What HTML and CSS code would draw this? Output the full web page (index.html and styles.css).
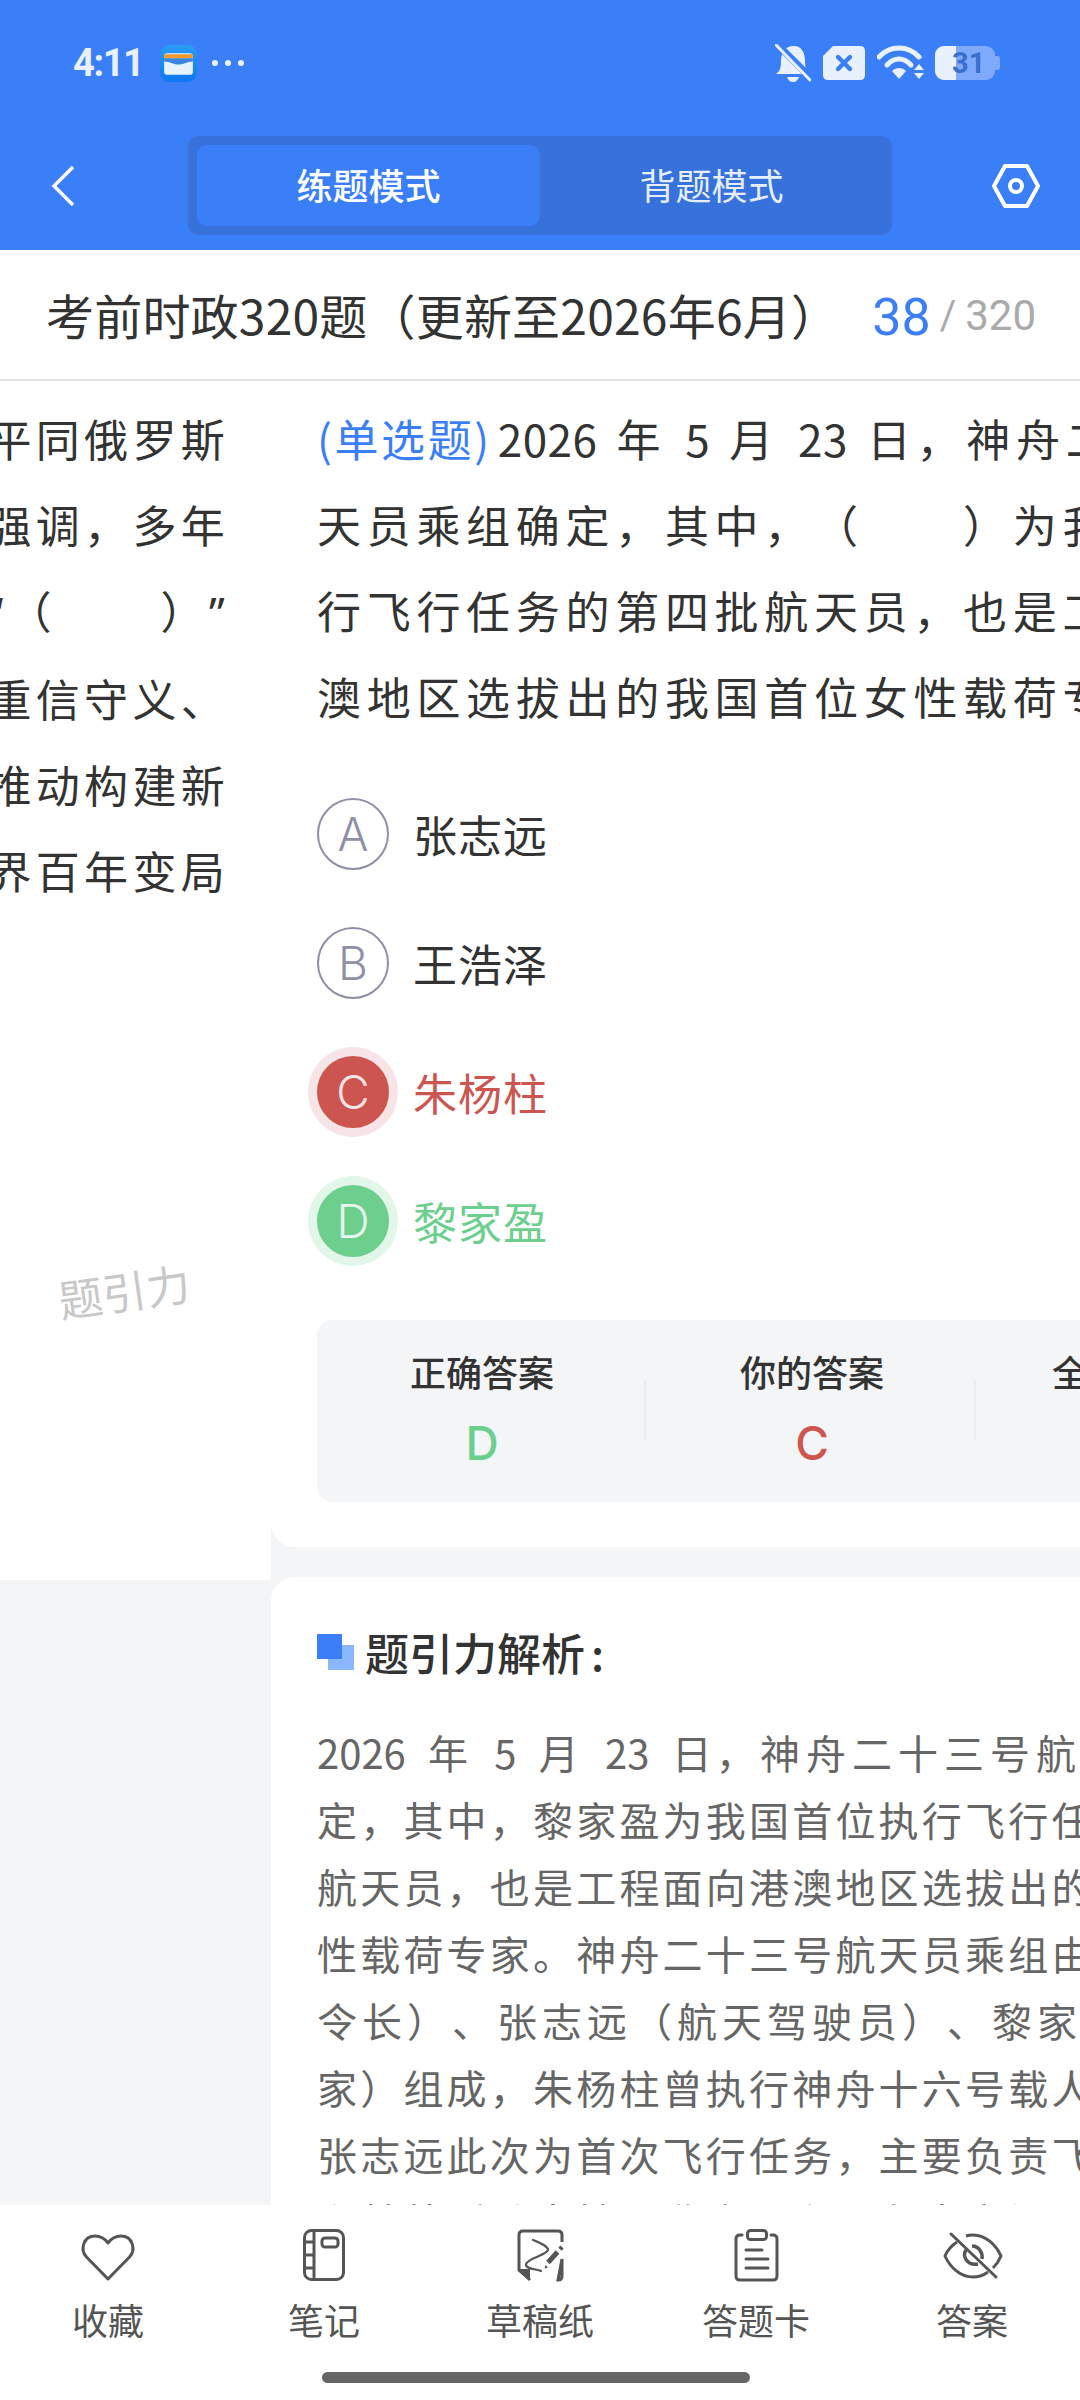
FILE: index.html
```html
<!DOCTYPE html>
<html lang="zh-CN">
<head>
  <meta charset="UTF-8" />
  <meta name="viewport" content="width=device-width, initial-scale=1.0"/>
  <title>练题模式</title>
  <link rel="stylesheet" href="styles.css">
</head>
<body>
  <div class="app">

    <div class="header">
      <div class="status-bar">
        <div class="status-left">
          <span class="time">4:11</span>
          <svg class="wallet" viewBox="0 0 36 36">
            <defs>
              <linearGradient id="walletBg" x1="0" y1="0" x2="0" y2="1">
                <stop offset="0" stop-color="#2a9cf8"/>
                <stop offset="1" stop-color="#0c78f2"/>
              </linearGradient>
            </defs>
            <rect width="36" height="36" rx="9" fill="url(#walletBg)"/>
            <rect x="4" y="8" width="28" height="21" rx="3" fill="#e8f2fd"/>
            <rect x="4" y="9" width="28" height="4" fill="#f09a2a"/>
            <path d="M4 13 H32 V16 C26 16 24 19 18 19 C12 19 10 16 4 16 Z" fill="#3d86dc"/>
          </svg>
          <svg class="more-dots" viewBox="0 0 34 8">
            <circle cx="4" cy="4" r="3" fill="#e9f0fe"/>
            <circle cx="17" cy="4" r="3" fill="#e9f0fe"/>
            <circle cx="30" cy="4" r="3" fill="#e9f0fe"/>
          </svg>
        </div>
        <div class="status-right">
          <svg class="st-bell" viewBox="0 0 36 38">
            <path d="M1 30 C5 27 6 24 6 17 C6 8 11 2 19 2 C26 2 30 8 30 17 C30 24 31 27 35 30 Z" fill="#e9f0fe"/>
            <path d="M12 33 H24 C23 36 21 38 18 38 C15 38 13 36 12 33 Z" fill="#e9f0fe"/>
            <path d="M0 -2 L37 35" stroke="#3b7ff8" stroke-width="7"/>
            <path d="M1 1 L35 36" stroke="#e9f0fe" stroke-width="3" stroke-linecap="round"/>
          </svg>
          <svg class="st-close" viewBox="0 0 44 36">
            <path d="M11 1 H38 Q43 1 43 6 V30 Q43 35 38 35 H6 Q1 35 1 30 V11 Z" fill="#e9f0fe"/>
            <path d="M16 12 L28 24 M28 12 L16 24" stroke="#3b7ff8" stroke-width="4.4" stroke-linecap="round"/>
          </svg>
          <svg class="st-wifi" viewBox="0 0 48 36">
            <path d="M2 12 C13 0 31 0 42 12" fill="none" stroke="#e9f0fe" stroke-width="5" stroke-linecap="round"/>
            <path d="M10 20 C17 12 27 12 34 20" fill="none" stroke="#e9f0fe" stroke-width="5" stroke-linecap="round"/>
            <path d="M15 26 L22 34 L29 26 C25 22 19 22 15 26 Z" fill="#e9f0fe"/>
            <path d="M42 19 L47 25 H37 Z M37 28 H47 L42 34 Z" fill="#e9f0fe"/>
          </svg>
          <div class="battery">
            <div class="battery-fill"></div>
            <span class="battery-num">31</span>
            <div class="battery-tip"></div>
          </div>
        </div>
      </div>

      <div class="nav-bar">
        <svg class="back-icon" viewBox="0 0 24 42">
          <path d="M22 2 L3 21 L22 40" fill="none" stroke="#fff" stroke-width="3.4"/>
        </svg>
        <div class="mode-switch">
          <div class="mode-btn active">练题模式</div>
          <div class="mode-btn">背题模式</div>
        </div>
        <svg class="gear-icon" viewBox="0 0 48 44">
          <path d="M13 2 H35 L46 22 L35 42 H13 L2 22 Z" fill="none" stroke="#fff" stroke-width="4" stroke-linejoin="round"/>
          <circle cx="24" cy="22" r="6" fill="none" stroke="#fff" stroke-width="4"/>
        </svg>
      </div>
    </div>

    <div class="title-row">
      <div class="paper-title">考前时政320题（更新至2026年6月）</div>
      <div class="progress"><span class="cur">38</span><span class="sep">/</span><span class="total">320</span></div>
    </div>

    <div class="main">
      <div class="prev-page">
        <div class="prev-lines">
          <div class="prev-line">习近平同俄罗斯</div>
          <div class="prev-line">总统强调，多年</div>
          <div class="prev-line prev-blank"><span class="q-mark">“</span>（　　&nbsp;）<span class="q-mark">”</span></div>
          <div class="prev-line">两国重信守义、</div>
          <div class="prev-line">共同推动构建新</div>
          <div class="prev-line">当今世界百年变局</div>
        </div>
        <div class="watermark">题引力</div>
      </div>

      <div class="cur-page">
        <div class="card question-card">
          <div class="question">
            <div class="q-line q-first"><span class="q-type">(单选题)</span><span class="num">2026</span> 年 <span class="num">5</span> 月 <span class="num">23</span> 日，神舟二十三号航</div>
            <div class="q-line">天员乘组确定，其中，（　　）为我国首位执</div>
            <div class="q-line">行飞行任务的第四批航天员，也是工程面向港</div>
            <div class="q-line">澳地区选拔出的我国首位女性载荷专家。</div>
          </div>

          <div class="options">
            <div class="option">
              <div class="opt-circle">A</div>
              <div class="opt-text">张志远</div>
            </div>
            <div class="option">
              <div class="opt-circle">B</div>
              <div class="opt-text">王浩泽</div>
            </div>
            <div class="option wrong">
              <div class="opt-circle">C</div>
              <div class="opt-text">朱杨柱</div>
            </div>
            <div class="option right">
              <div class="opt-circle">D</div>
              <div class="opt-text">黎家盈</div>
            </div>
          </div>

          <div class="answer-box">
            <div class="answer-col">
              <div class="answer-label">正确答案</div>
              <div class="answer-val green">D</div>
            </div>
            <div class="answer-col">
              <div class="answer-label">你的答案</div>
              <div class="answer-val red">C</div>
            </div>
            <div class="answer-col">
              <div class="answer-label">全站正确率</div>
              <div class="answer-val">62%</div>
            </div>
          </div>
        </div>

        <div class="card analysis-card">
          <div class="analysis-head">
            <div class="head-mark"><i class="mark-back"></i><i class="mark-front"></i></div>
            <span>题引力解析<span class="colon">:</span></span>
          </div>
          <div class="analysis-body">
            <div class="a-line a-first"><span class="num">2026</span> 年 <span class="num">5</span> 月 <span class="num">23</span> 日，<span class="a-wide">神舟二十三号航天</span></div>
            <div class="a-line">定，其中，黎家盈为我国首位执行飞行任务的第四批</div>
            <div class="a-line">航天员，也是工程面向港澳地区选拔出的首位女</div>
            <div class="a-line">性载荷专家。神舟二十三号航天员乘组由朱杨柱</div>
            <div class="a-line a-loose">令长）、张志远（航天驾驶员）、黎家盈（载荷专</div>
            <div class="a-line">家）组成，朱杨柱曾执行神舟十六号载人飞行任务，</div>
            <div class="a-line">张志远此次为首次飞行任务，主要负责飞船操控</div>
            <div class="a-line">和舱外活动支持，黎家盈主要负责空间科学实验</div>
          </div>
        </div>
      </div>
    </div>

    <div class="tab-bar">
      <div class="tab">
        <svg class="tab-icon" viewBox="0 0 60 52">
          <path d="M30 50 L8.5 28 C2 21 5 7 17 7 C23 7 27 10 30 14 C33 10 37 7 43 7 C55 7 58 21 51.5 28 Z" fill="none" stroke="#555" stroke-width="3" stroke-linejoin="round"/>
        </svg>
        <span>收藏</span>
      </div>
      <div class="tab">
        <svg class="tab-icon" viewBox="0 0 60 52">
          <rect x="10.5" y="1.5" width="39" height="49" rx="7" fill="none" stroke="#555" stroke-width="3"/>
          <path d="M20 2 V50 M11 13 H20 M11 26 H20 M11 39 H20" stroke="#555" stroke-width="3"/>
          <rect x="28" y="9" width="16" height="9" rx="3" fill="none" stroke="#555" stroke-width="3"/>
        </svg>
        <span>笔记</span>
      </div>
      <div class="tab">
        <svg class="tab-icon" viewBox="0 0 60 52">
          <path d="M20 51 L9 41 V6 Q9 2 13 2 H48 Q52 2 52 6 V13 M52 30 V47 Q52 51 48 51 Z" fill="none" stroke="#555" stroke-width="3"/>
          <path d="M9 40 H20 V51 Z" fill="#555"/>
          <path d="M23 11 C30 14 38 17 38 21 C37 26 18 29 16 35 C15 40 26 40 31 42" fill="none" stroke="#555" stroke-width="2.2" stroke-linecap="round"/>
          <path d="M47.5 23 L38 33.5" stroke="#555" stroke-width="5"/>
          <path d="M35.5 36 L34.5 39.5 L38 38.5 Z" fill="#555"/>
          <path d="M52 18 L50 20.2" stroke="#555" stroke-width="4.5"/>
        </svg>
        <span>草稿纸</span>
      </div>
      <div class="tab">
        <svg class="tab-icon" viewBox="0 0 60 52">
          <path d="M16 6 H14 Q10 6 10 10 V47 Q10 51 14 51 H47 Q51 51 51 47 V10 Q51 6 47 6 H45" fill="none" stroke="#555" stroke-width="3" stroke-linecap="round"/>
          <rect x="21.5" y="1.5" width="19" height="9" rx="3" fill="none" stroke="#555" stroke-width="3"/>
          <path d="M20 21 H36 M20 30 H42 M20 39 H42" stroke="#555" stroke-width="3" stroke-linecap="round"/>
        </svg>
        <span>答题卡</span>
      </div>
      <div class="tab">
        <svg class="tab-icon" viewBox="0 0 60 52">
          <path d="M15 13 C9 17 5 22 3 27 C8 38 18 48 31 48 C37 48 42 46 46 43 M24 7 C27 6 29 6 31 6 C44 6 54 16 59 27 C57 32 54 36 51 39" fill="none" stroke="#555" stroke-width="3"/>
          <path d="M24 21 C20 27 25 37 36 35" fill="none" stroke="#555" stroke-width="3.4"/>
          <path d="M30 17 C37 17 41 24 40 30" fill="none" stroke="#555" stroke-width="3.4"/>
          <path d="M9 5 L54 48" stroke="#555" stroke-width="3" stroke-linecap="round"/>
        </svg>
        <span>答案</span>
      </div>
      <div class="home-bar"></div>
    </div>

  </div>
</body>
</html>
```

FILE: styles.css
```css
:root {
  --blue: #3b7ff8;
  --bg-gray: #f4f5f7;
  --text: #333;
  --red: #cd5550;
  --green: #6ccf8e;
}

* {
  margin: 0;
  padding: 0;
  box-sizing: border-box;
}

body {
  margin: 0;
  background: var(--bg-gray);
  font-family: "Noto Sans CJK SC", "Noto Sans", sans-serif;
  color: var(--text);
  text-spacing-trim: space-all;
}

.app {
  width: 1080px;
  height: 2400px;
  display: flex;
  flex-direction: column;
  overflow: hidden;
}

/* header */
.header {
  height: 250px;
  background: var(--blue);
  flex-shrink: 0;
}

.status-bar {
  height: 136px;
  padding: 43px 80px 0 73px;
  display: flex;
  justify-content: space-between;
  align-items: flex-start;
}

.status-left {
  display: flex;
  align-items: center;
  height: 40px;
}

.time {
  font-family: Roboto, sans-serif;
  font-size: 38px;
  font-weight: 700;
  color: #e9f0fe;
  line-height: 40px;
  letter-spacing: -1.4px;
}

.wallet {
  width: 37px;
  height: 37px;
  margin-left: 16px;
}

.more-dots {
  width: 34px;
  height: 8px;
  margin-left: 14px;
}

.status-right {
  display: flex;
  align-items: center;
  height: 40px;
}

.st-bell {
  width: 36px;
  height: 38px;
}

.st-close {
  width: 44px;
  height: 36px;
  margin-left: 11px;
}

.st-wifi {
  width: 48px;
  height: 36px;
  margin-left: 11px;
}

.battery {
  position: relative;
  width: 60px;
  height: 34px;
  margin-left: 10px;
  margin-right: 5px;
  border-radius: 9px;
  background: #7fa9fb;
}

.battery-fill {
  width: 21px;
  height: 34px;
  background: #e9f0fe;
  border-radius: 9px 0 0 9px;
}

.battery-num {
  position: absolute;
  left: 17px;
  top: 0;
  font-family: Roboto, sans-serif;
  font-size: 29px;
  font-weight: 700;
  line-height: 34px;
  color: #3a6fd0;
}

.battery-tip {
  position: absolute;
  right: -5px;
  top: 10px;
  width: 5px;
  height: 14px;
  border-radius: 0 3px 3px 0;
  background: #7fa9fb;
}

.nav-bar {
  height: 99px;
  padding: 0 40px 0 51px;
  display: flex;
  align-items: center;
  justify-content: space-between;
}

.back-icon {
  width: 24px;
  height: 42px;
}

.gear-icon {
  width: 48px;
  height: 44px;
}

.mode-switch {
  width: 704px;
  height: 99px;
  margin-left: 113px;
  margin-right: 100px;
  padding: 9px;
  display: flex;
  background: #3671dc;
  border-radius: 10px;
}

.mode-btn {
  width: 343px;
  border-radius: 10px;
  text-align: center;
  color: #e6eefe;
  font-size: 36px;
  line-height: 78px;
}

.mode-btn.active {
  background: var(--blue);
  color: #fff;
  font-weight: 500;
}

.mode-btn + .mode-btn {
  flex: 1;
}

/* title */
.title-row {
  height: 131px;
  flex-shrink: 0;
  padding: 0 44px 2px 46px;
  background: #fff;
  border-bottom: 2px solid #e4e4e4;
  display: flex;
  align-items: center;
  justify-content: space-between;
  white-space: nowrap;
}

.paper-title {
  font-size: 48px;
  letter-spacing: 0.2px;
}

.progress {
  display: flex;
  align-items: center;
  font-family: Roboto, sans-serif;
}

.progress .cur {
  color: var(--blue);
  font-size: 52px;
  margin-top: 8px;
}

.progress .sep {
  color: #aaa;
  font-size: 40px;
  margin: 3px 9px 0 9px;
}

.progress .total {
  color: #aaa;
  font-size: 42px;
  margin-top: 3px;
}

/* swiped pages */
.main {
  flex: 1;
  min-height: 0;
  display: flex;
  overflow: hidden;
}

.prev-page {
  position: relative;
  width: 271px;
  height: 1199px;
  flex-shrink: 0;
  background: #fff;
  overflow: hidden;
}

.prev-lines {
  padding: 14px 46px 0 0;
  display: flex;
  flex-direction: column;
  align-items: flex-end;
}

.prev-line {
  font-size: 44px;
  line-height: 86px;
  letter-spacing: 4.3px;
  margin-right: -4px;
  white-space: nowrap;
}

.prev-blank {
  word-spacing: -6px;
}

.q-mark {
  font-family: "Noto Sans", sans-serif;
}

.watermark {
  position: absolute;
  left: 58px;
  top: 884px;
  font-size: 44px;
  line-height: 50px;
  color: #c8c8c8;
  transform: rotate(-8deg);
}

.cur-page {
  flex: 1;
  min-width: 0;
}

.card {
  background: #fff;
  overflow: hidden;
}

.question-card {
  height: 1166px;
  padding: 14px 0 0 46px;
  border-radius: 0 0 0 24px;
}

.q-line {
  font-size: 44px;
  line-height: 86px;
  letter-spacing: 5.7px;
  white-space: nowrap;
}

.q-first {
  word-spacing: 3.5px;
}

.q-first .num {
  letter-spacing: 0.5px;
}

.q-type {
  color: var(--blue);
  letter-spacing: 2.6px;
  margin-right: 6px;
}

.options {
  margin-top: 59px;
  display: flex;
  flex-direction: column;
  gap: 57px;
}

.option {
  display: flex;
  align-items: center;
  gap: 24px;
}

.opt-circle {
  width: 72px;
  height: 72px;
  border-radius: 50%;
  border: 2px solid #8e90a6;
  color: #8e90a6;
  font-family: Inter, sans-serif;
  font-size: 46px;
  font-weight: 300;
  line-height: 68px;
  text-align: center;
  flex-shrink: 0;
}

.opt-text {
  font-size: 44px;
  letter-spacing: 1px;
  line-height: 72px;
}

.option.wrong .opt-circle {
  background: var(--red);
  border-color: var(--red);
  color: #f8e4e4;
  box-shadow: 0 0 0 9px #f6e4e6;
}

.option.wrong .opt-text {
  color: var(--red);
}

.option.right .opt-circle {
  background: var(--green);
  border-color: var(--green);
  color: #e6f8ec;
  box-shadow: 0 0 0 9px #e2f6ea;
}

.option.right .opt-text {
  color: var(--green);
}

.answer-box {
  width: 990px;
  height: 182px;
  margin-top: 63px;
  background: var(--bg-gray);
  border-radius: 16px;
  display: flex;
}

.answer-col {
  position: relative;
  width: 330px;
  flex-shrink: 0;
  text-align: center;
  padding-top: 27px;
}

.answer-col + .answer-col::before {
  content: "";
  position: absolute;
  left: -3px;
  top: 60px;
  width: 2px;
  height: 60px;
  background: #ebecee;
}

.answer-label {
  font-size: 36px;
  font-weight: 500;
  line-height: 48px;
}

.answer-val {
  margin-top: 16px;
  font-family: Inter, sans-serif;
  font-size: 46px;
  font-weight: 500;
  line-height: 64px;
}

.answer-val.green {
  color: var(--green);
}

.answer-val.red {
  color: var(--red);
}

.analysis-card {
  height: 1000px;
  margin-top: 30px;
  padding: 45px 0 0 46px;
  border-radius: 24px 0 0 0;
}

.analysis-head {
  display: flex;
  align-items: center;
  gap: 11px;
  height: 60px;
  font-size: 44px;
  font-weight: 500;
  white-space: nowrap;
}

.colon {
  margin-left: 6px;
}

.head-mark {
  position: relative;
  width: 37px;
  height: 36px;
  flex-shrink: 0;
}

.head-mark i {
  position: absolute;
  display: block;
}

.mark-back {
  left: 11px;
  top: 11px;
  width: 26px;
  height: 25px;
  background: #8ab7fb;
}

.mark-front {
  left: 0;
  top: 0;
  width: 25px;
  height: 25px;
  background: var(--blue);
}

.analysis-body {
  margin-top: 37px;
}

.a-line {
  font-size: 40px;
  line-height: 67px;
  letter-spacing: 3.2px;
  color: #666;
  white-space: nowrap;
}

.a-first {
  letter-spacing: 4.2px;
  word-spacing: 9px;
}

.a-first .num {
  letter-spacing: 0;
}

.a-wide {
  letter-spacing: 6px;
}

.a-loose {
  letter-spacing: 5px;
}

/* bottom tabs */
.tab-bar {
  position: relative;
  height: 195px;
  flex-shrink: 0;
  background: #fff;
  display: flex;
  align-items: flex-start;
  padding-top: 24px;
}

.tab {
  width: 216px;
  display: flex;
  flex-direction: column;
  align-items: center;
  font-size: 36px;
  color: #555;
}

.tab-icon {
  width: 60px;
  height: 52px;
  overflow: visible;
}

.tab span {
  margin-top: 11px;
  line-height: 54px;
}

.home-bar {
  position: absolute;
  left: 322px;
  bottom: 17px;
  width: 428px;
  height: 11px;
  border-radius: 6px;
  background: #666;
}
```
